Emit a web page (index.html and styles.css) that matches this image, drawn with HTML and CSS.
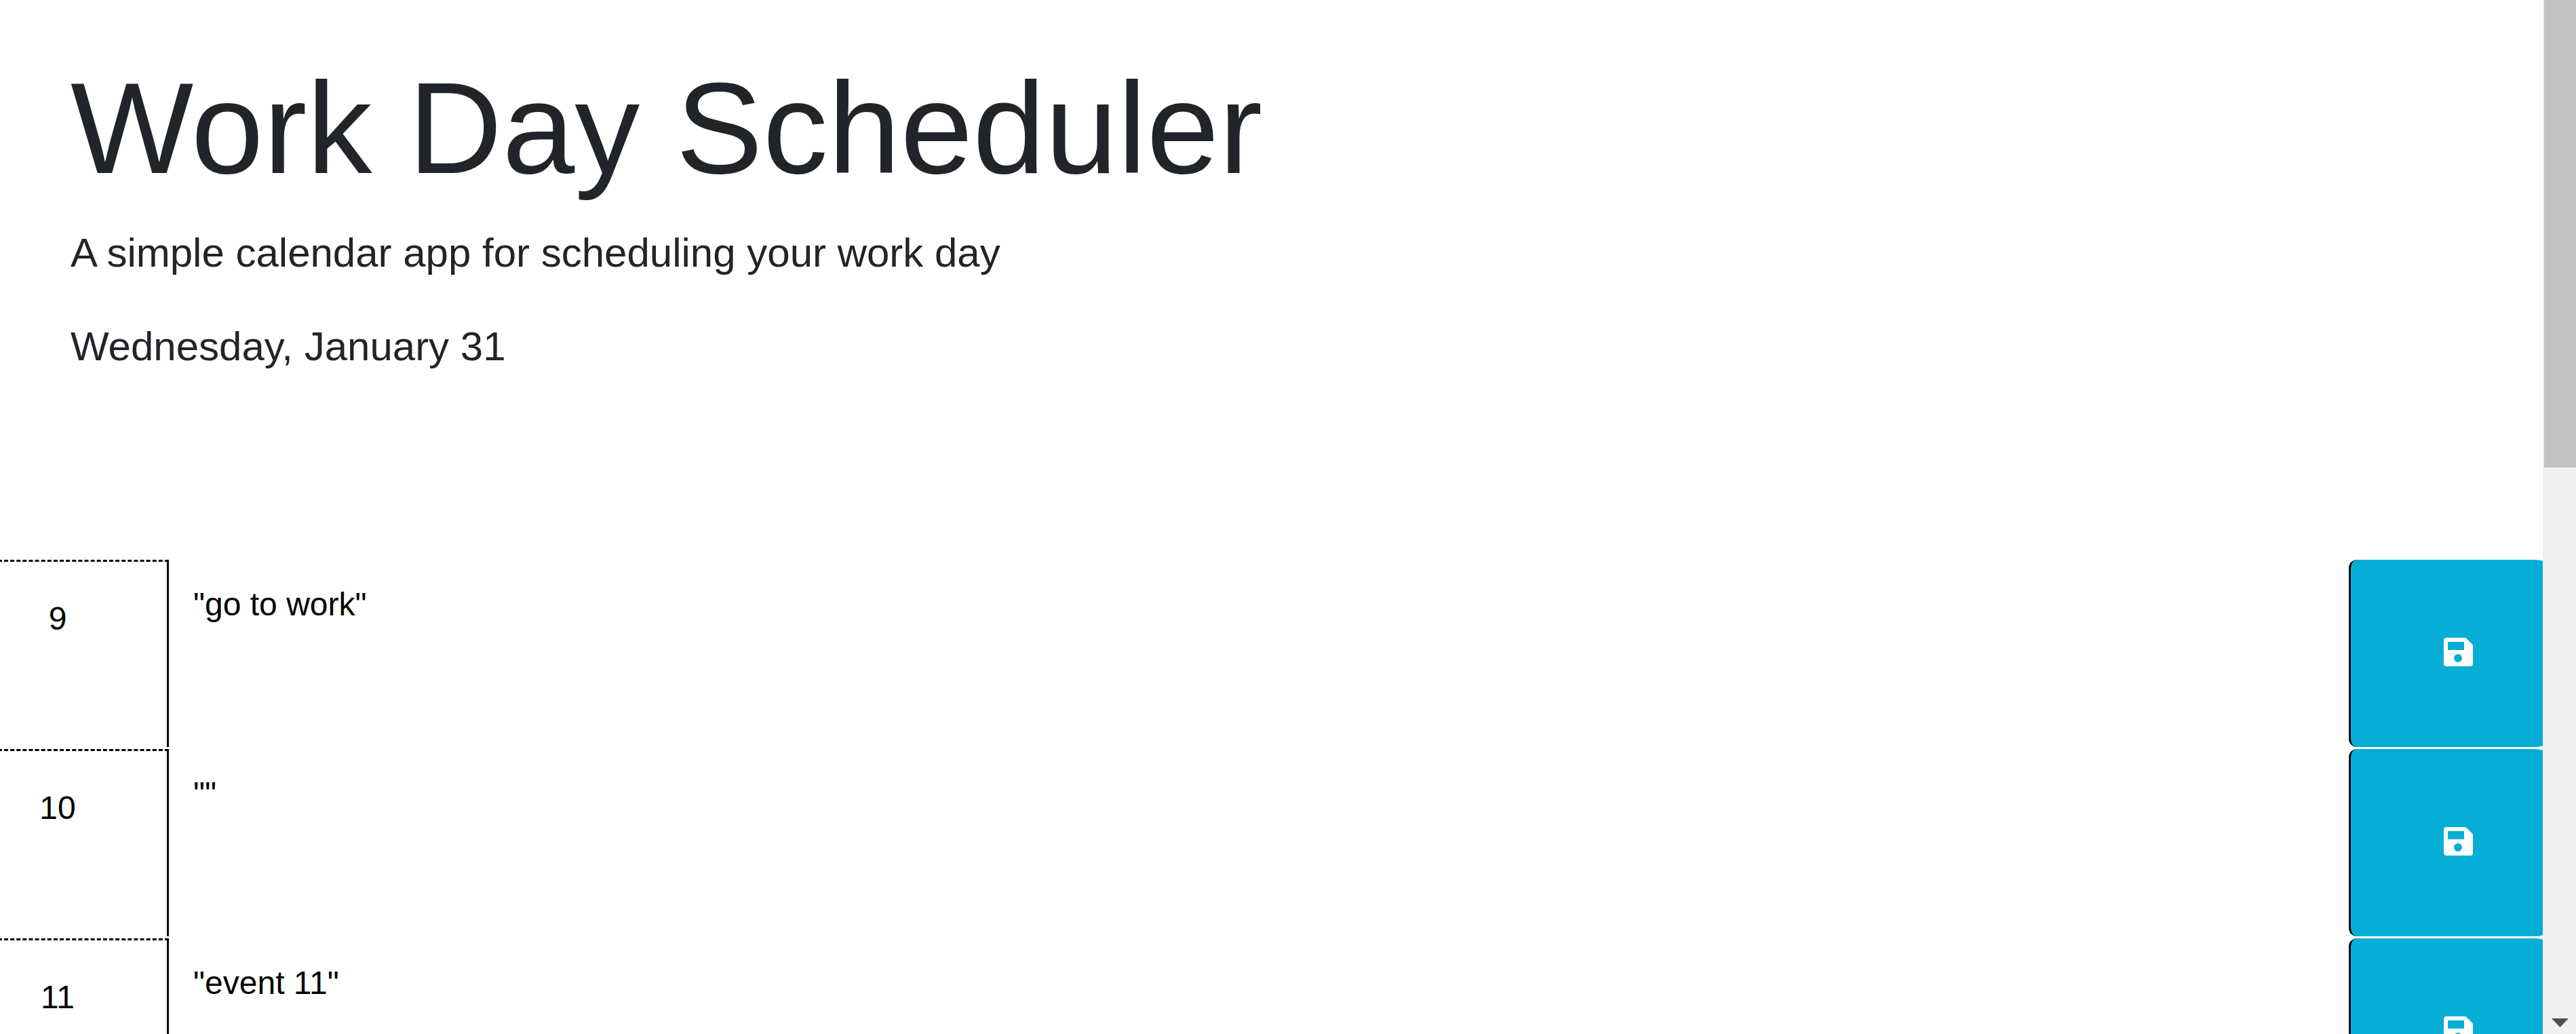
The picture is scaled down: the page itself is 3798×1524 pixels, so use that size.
FILE: index.html
```html
<!DOCTYPE html>
<html lang="en">
<head>
  <meta charset="utf-8">
  <title>Work Day Scheduler</title>
  <link rel="stylesheet" href="styles.css">
</head>
<body>
  <svg class="sprite" aria-hidden="true">
    <symbol id="save" viewBox="0 0 43 42">
      <path fill-rule="evenodd" d="M4 0H31Q32.500 0 33.500 1L42 9.500Q43 10.500 43 12V38Q43 42 39 42H4Q0 42 0 38V4Q0 0 4 0ZM7 6Q6 6 6 7V17Q6 18 7 18H29Q30 18 30 17V7Q30 6 29 6ZM21 24A6 6 0 1 0 21 36A6 6 0 1 0 21 24Z"/>
    </symbol>
  </svg>
  <div class="page">
    <div class="content">
      <header class="header">
        <h1 class="title">Work Day Scheduler</h1>
        <p class="lead">A simple calendar app for scheduling your work day</p>
        <p class="lead">Wednesday, January 31</p>
      </header>
      <main class="schedule">
        <div class="time-block">
          <label class="hour" for="hour-9">9</label>
          <textarea class="description" id="hour-9">"go to work"</textarea>
          <button class="save-btn" type="button" aria-label="Save 9"><svg class="icon"><use href="#save"/></svg></button>
        </div>
        <div class="time-block">
          <label class="hour" for="hour-10">10</label>
          <textarea class="description" id="hour-10">""</textarea>
          <button class="save-btn" type="button" aria-label="Save 10"><svg class="icon"><use href="#save"/></svg></button>
        </div>
        <div class="time-block">
          <label class="hour" for="hour-11">11</label>
          <textarea class="description" id="hour-11">"event 11"</textarea>
          <button class="save-btn" type="button" aria-label="Save 11"><svg class="icon"><use href="#save"/></svg></button>
        </div>
      </main>
    </div>
    <div class="scrollbar" aria-hidden="true">
      <div class="thumb"></div>
      <div class="arrow"></div>
    </div>
  </div>
</body>
</html>
```
FILE: styles.css
```css
* {
  box-sizing: border-box;
}

body {
  margin: 0;
  background: #fff;
  color: #212529;
  font: 48px/72px "Liberation Sans", Arial, sans-serif;
}

.sprite {
  display: none;
}

.page {
  display: flex;
  height: 100vh;
  overflow: hidden;
}

.content {
  flex: 1;
  min-width: 0;
  overflow: hidden;
}

.header {
  padding: 74px 104px 221px;
}

.title {
  margin: 0 0 24px;
  font-size: 192px;
  font-weight: 400;
  line-height: 230px;
}

.lead {
  margin: 0 0 48px;
  font-size: 60px;
  line-height: 90px;
}

/* Rows run past both sides of the content area */
.schedule {
  display: grid;
  gap: 3px;
  margin: 0 -33px 0 -76px;
}

.time-block {
  display: flex;
  height: 276px;
  color: #000;
}

.hour {
  flex: 0 0 325px;
  padding-top: 48px;
  border-top: 3px dashed #000;
  border-right: 3px solid #000;
  text-align: center;
}

.description {
  flex: 1;
  min-width: 0;
  padding: 30px 36px;
  border: 0;
  outline: 0;
  resize: none;
  overflow: hidden;
  background: transparent;
  color: inherit;
  font: inherit;
}

.save-btn {
  flex: 0 0 319px;
  display: flex;
  align-items: center;
  justify-content: center;
  padding: 0 0 4px;
  border: 0;
  border-left: 3px solid #000;
  border-radius: 12px 45px 45px 12px;
  background: #06aed5;
  color: #fff;
}

.icon {
  width: 43px;
  height: 42px;
  fill: currentColor;
}

.scrollbar {
  flex: 0 0 49px;
  display: flex;
  flex-direction: column;
  justify-content: space-between;
  padding: 0 0 10px 2px;
  background: #f0f0f0;
}

.thumb {
  height: 689px;
  background: #c1c1c1;
}

.arrow {
  width: 25px;
  height: 13px;
  margin-left: 11px;
  background: #505050;
  clip-path: polygon(0 0, 100% 0, 50% 100%);
}
```
